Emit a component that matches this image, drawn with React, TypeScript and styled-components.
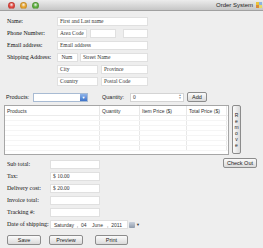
import styled, { createGlobalStyle } from "styled-components";

const GlobalStyle = createGlobalStyle`
  * { box-sizing: border-box; }
  body {
    margin: 0;
    background: #eeeeee;
    font-family: "Liberation Serif", serif;
  }
`;

const Window = styled.div`
  width: 263px;
  height: 248px;
  display: flex;
  flex-direction: column;
  background: #eeeeee;
  overflow: hidden;
`;

const TitleBar = styled.div`
  height: 11px;
  flex: none;
  display: flex;
  align-items: center;
  padding: 0 1px 0 8px;
  background: linear-gradient(#ececec, #c6c6c6);
  border-bottom: 1px solid #a0a0a0;
`;

const Light = styled.span<{ $c: string }>`
  width: 7px;
  height: 7px;
  border-radius: 50%;
  margin-right: 5px;
  background: radial-gradient(circle at 50% 35%, #ffffffaa 0, ${(p) => p.$c} 55%);
  border: 1px solid #00000022;
`;

const Title = styled.span`
  margin-left: auto;
  font-family: "Liberation Sans", sans-serif;
  font-size: 6px;
  color: #222;
  margin-right: 3px;
`;

const Body = styled.div`
  flex: 1;
  display: flex;
  flex-direction: column;
  padding-top: 6px;
`;

const Form = styled.div<{ $label: number }>`
  display: grid;
  grid-template-columns: ${(p) => p.$label}px auto;
  grid-auto-rows: 9px;
  row-gap: 3px;
  padding-left: 7px;
  align-items: center;
`;

const Label = styled.span`
  font-size: 6px;
  color: #111;
  white-space: nowrap;
  line-height: 9px;
`;

const Fields = styled.div`
  display: flex;
  height: 9px;
`;

const Field = styled.div<{ $w: number; $ml?: number }>`
  width: ${(p) => p.$w}px;
  margin-left: ${(p) => p.$ml ?? 0}px;
  height: 9px;
  background: #fff;
  border: 1px solid #e0e0e0;
  font-size: 5.5px;
  line-height: 7px;
  color: #333;
  padding-left: 2px;
  white-space: nowrap;
  overflow: hidden;
`;

const ProductRow = styled.div`
  display: flex;
  align-items: center;
  height: 10px;
  margin-top: 6px;
  padding-left: 6px;
`;

const SansLabel = styled.span<{ $w: number; $ml?: number }>`
  width: ${(p) => p.$w}px;
  margin-left: ${(p) => p.$ml ?? 0}px;
  font-family: "Liberation Sans", sans-serif;
  font-size: 5.5px;
  color: #222;
`;

const Combo = styled.div`
  width: 55px;
  height: 9px;
  display: flex;
  background: #fff;
  border: 1px solid #a8bbd3;
`;

const ComboArrow = styled.div`
  margin-left: auto;
  width: 7px;
  height: 100%;
  background: linear-gradient(#8fb4ea, #3c72c8);
  display: flex;
  align-items: center;
  justify-content: center;
  color: #fff;
  font-size: 4px;
`;

const Spinner = styled.div`
  width: 54px;
  height: 9px;
  display: flex;
  align-items: center;
  background: #fff;
  border: 1px solid #d4d4d4;
  font-size: 5.5px;
  color: #444;
  padding-left: 2px;
  margin-right: 3px;
`;

const SpinArrows = styled.div`
  margin-left: auto;
  width: 6px;
  display: flex;
  flex-direction: column;
  align-items: center;
  font-size: 3px;
  line-height: 3px;
  color: #888;
`;

const Button = styled.div<{ $w: number; $ml?: number }>`
  width: ${(p) => p.$w}px;
  margin-left: ${(p) => p.$ml ?? 0}px;
  height: 10px;
  border: 1px solid #8c8c8c;
  border-radius: 2px;
  background: linear-gradient(#fbfbfb, #dadada);
  font-family: "Liberation Sans", sans-serif;
  font-size: 5.5px;
  color: #222;
  display: flex;
  align-items: center;
  justify-content: center;
  flex: none;
`;

const TableRow = styled.div`
  display: flex;
  margin-top: 3px;
  padding-left: 4px;
`;

const Table = styled.div`
  width: 225px;
  height: 50px;
  background: #fff;
  border: 1px solid #a6a6a6;
  display: flex;
  flex-direction: column;
  overflow: hidden;
`;

const Head = styled.div`
  display: flex;
  height: 10px;
  flex: none;
  border-bottom: 1px solid #ececec;
`;

const Cell = styled.div<{ $w: number }>`
  width: ${(p) => p.$w}px;
  height: 100%;
  border-right: 1px solid #e8e8e8;
  font-family: "Liberation Sans", sans-serif;
  font-size: 5px;
  color: #333;
  padding-left: 2px;
  display: flex;
  align-items: center;
  white-space: nowrap;
`;

const Line = styled.div`
  display: flex;
  height: 5px;
  flex: none;
  border-bottom: 1px solid #f5f5f5;
`;

const RemoveButton = styled.div`
  width: 9px;
  height: 49px;
  margin-left: 3px;
  border: 1px solid #8c8c8c;
  border-radius: 2px;
  background: linear-gradient(90deg, #fbfbfb, #dadada);
  display: flex;
  flex-direction: column;
  align-items: center;
  justify-content: center;
`;

const Letter = styled.span`
  display: block;
  height: 6px;
  line-height: 6px;
  font-family: "Liberation Sans", sans-serif;
  font-size: 5px;
  color: #222;
`;

const Lower = styled.div`
  display: flex;
  justify-content: space-between;
  align-items: flex-start;
  margin-top: 3px;
  padding-right: 6px;
`;

const LowerForm = styled(Form)`
  margin-top: 2px;
`;

const DateBox = styled.div`
  width: 78px;
  height: 9px;
  display: flex;
  align-items: center;
  background: #fff;
  border: 1px solid #e0e0e0;
  font-family: "Liberation Sans", sans-serif;
  font-size: 5px;
  color: #333;
  padding-left: 3px;
  white-space: pre;
`;

const CalIcon = styled.div`
  width: 6px;
  height: 6px;
  margin-left: 1px;
  align-self: center;
  border-radius: 1px;
  background: linear-gradient(#c8d0dc, #8e9aaa);
`;

const Caret = styled.span`
  font-size: 4px;
  color: #333;
  margin-left: 1px;
  align-self: center;
`;

const ButtonRow = styled.div`
  display: flex;
  margin-top: 6px;
  padding-left: 7px;
`;

const cols = [95, 40, 47, 40];

export default function App() {
  return (
    <Window>
      <GlobalStyle />
      <TitleBar>
        <Light $c="#e2453c" />
        <Light $c="#e8a42c" />
        <Light $c="#5cae3c" />
        <Title>Order System</Title>
        <svg width="6" height="6" viewBox="0 0 6 6">
          <rect x="0" y="0" width="3" height="3" fill="#e9c43a" />
          <rect x="3" y="0" width="3" height="3" fill="#8fb3e0" />
          <rect x="0" y="3" width="3" height="3" fill="#d98a3a" />
          <rect x="3" y="3" width="3" height="3" fill="#e9d86a" />
        </svg>
      </TitleBar>
      <Body>
        <Form $label={50}>
          <Label>Name:</Label>
          <Field $w={91}>First and Last name</Field>
          <Label>Phone Number:</Label>
          <Fields>
            <Field $w={30}>Area Code</Field>
            <Field $w={26} $ml={3} />
            <Field $w={25} $ml={7} />
          </Fields>
          <Label>Email address:</Label>
          <Field $w={91}>Email address</Field>
          <Label>Shipping Address:</Label>
          <Fields>
            <Field $w={21}>&nbsp;Num</Field>
            <Field $w={68} $ml={2}>Street Name</Field>
          </Fields>
          <span />
          <Fields>
            <Field $w={41}>City</Field>
            <Field $w={47} $ml={3}>Province</Field>
          </Fields>
          <span />
          <Fields>
            <Field $w={41}>Country</Field>
            <Field $w={47} $ml={3}>Postal Code</Field>
          </Fields>
        </Form>

        <ProductRow>
          <SansLabel $w={27}>Products:</SansLabel>
          <Combo>
            <ComboArrow>▼</ComboArrow>
          </Combo>
          <SansLabel $w={28} $ml={14}>Quantity:</SansLabel>
          <Spinner>
            0
            <SpinArrows>
              <span>▲</span>
              <span>▼</span>
            </SpinArrows>
          </Spinner>
          <Button $w={20}>Add</Button>
        </ProductRow>

        <TableRow>
          <Table>
            <Head>
              <Cell $w={cols[0]}>Products</Cell>
              <Cell $w={cols[1]}>Quantity</Cell>
              <Cell $w={cols[2]}>Item Price ($)</Cell>
              <Cell $w={cols[3]}>Total Price ($)</Cell>
            </Head>
            {[0, 1, 2, 3, 4, 5, 6].map((i) => (
              <Line key={i}>
                {cols.map((w, j) => (
                  <Cell key={j} $w={w} />
                ))}
              </Line>
            ))}
          </Table>
          <RemoveButton>
            {"Remove".split("").map((ch, i) => (
              <Letter key={i}>{ch}</Letter>
            ))}
          </RemoveButton>
        </TableRow>

        <Lower>
          <LowerForm $label={43}>
            <Label>Sub total:</Label>
            <Field $w={50} />
            <Label>Tax:</Label>
            <Field $w={50}>$ 10.00</Field>
            <Label>Delivery cost:</Label>
            <Field $w={50}>$ 20.00</Field>
            <Label>Invoice total:</Label>
            <Field $w={50} />
            <Label>Tracking #:</Label>
            <Field $w={50} />
            <Label>Date of shipping:</Label>
            <Fields>
              <DateBox>{"Saturday  ,  04    June   ,  2011"}</DateBox>
              <CalIcon />
              <Caret>▼</Caret>
            </Fields>
          </LowerForm>
          <Button $w={34}>Check Out</Button>
        </Lower>

        <ButtonRow>
          <Button $w={34}>Save</Button>
          <Button $w={34} $ml={8}>Preview</Button>
          <Button $w={33} $ml={12}>Print</Button>
        </ButtonRow>
      </Body>
    </Window>
  );
}
